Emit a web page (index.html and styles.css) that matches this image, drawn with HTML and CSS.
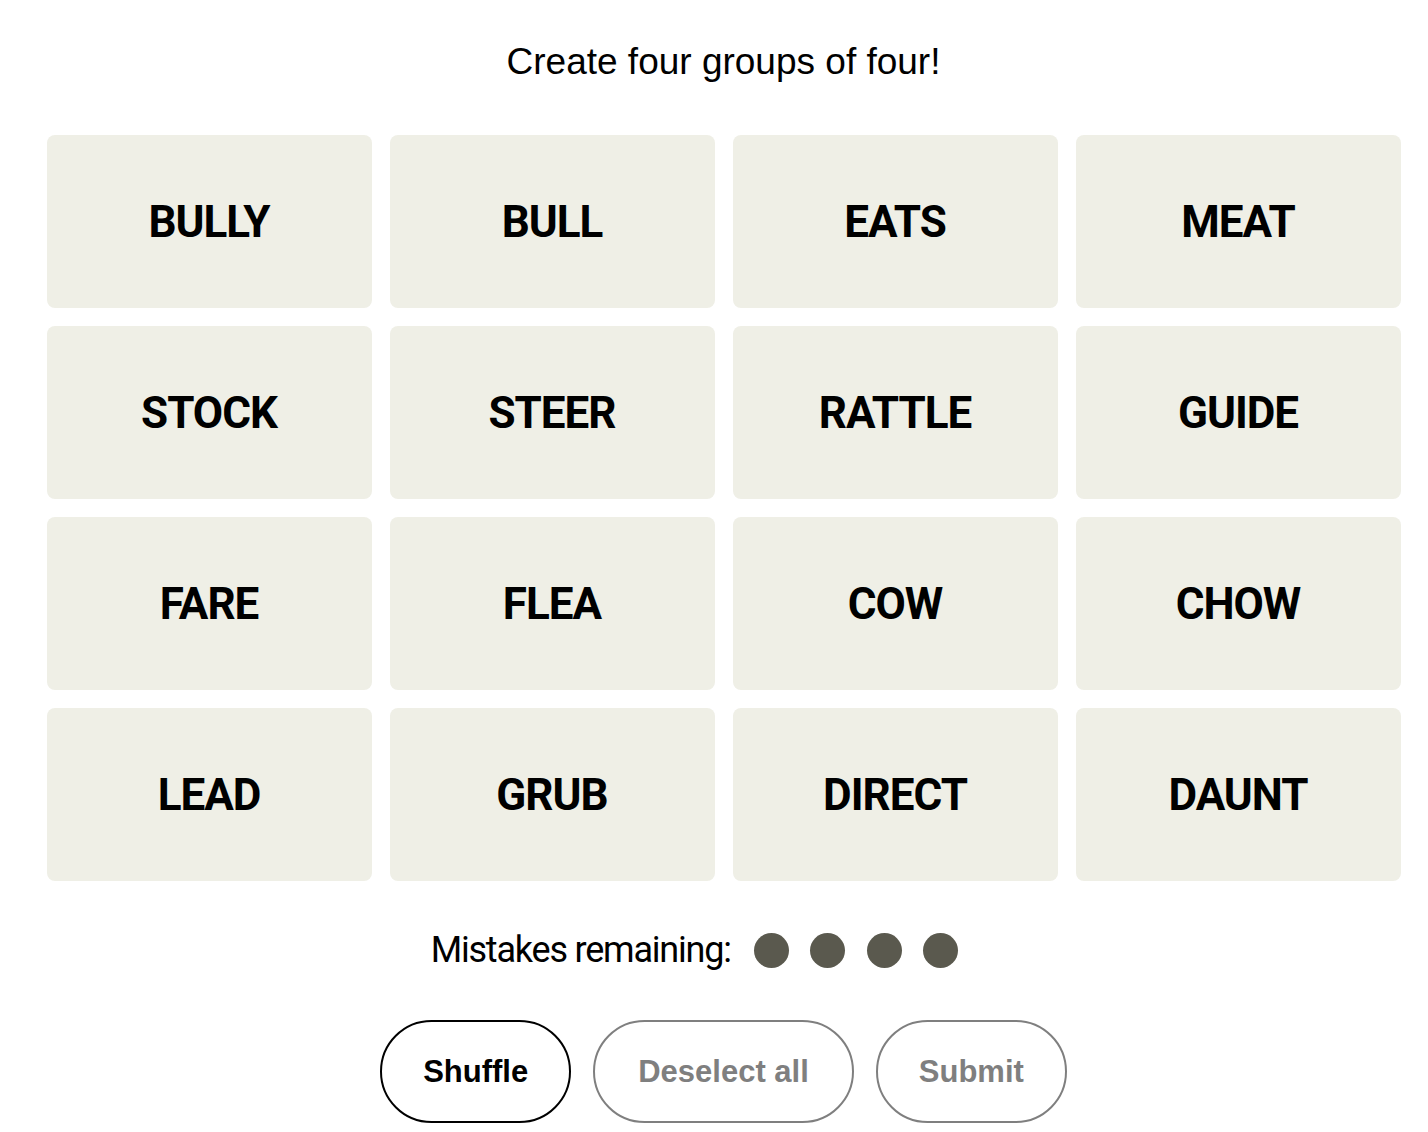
FILE: index.html
```html
<!DOCTYPE html>
<html lang="en">
<head>
<meta charset="utf-8">
<title>Connections</title>
<link rel="stylesheet" href="styles.css">
</head>
<body>
<main class="page">
  <h1 class="prompt">Create four groups of four!</h1>
  <section class="board">
    <div class="tile">BULLY</div>
    <div class="tile">BULL</div>
    <div class="tile">EATS</div>
    <div class="tile">MEAT</div>
    <div class="tile">STOCK</div>
    <div class="tile">STEER</div>
    <div class="tile">RATTLE</div>
    <div class="tile">GUIDE</div>
    <div class="tile">FARE</div>
    <div class="tile">FLEA</div>
    <div class="tile">COW</div>
    <div class="tile">CHOW</div>
    <div class="tile">LEAD</div>
    <div class="tile">GRUB</div>
    <div class="tile">DIRECT</div>
    <div class="tile">DAUNT</div>
  </section>
  <div class="mistakes">
    <span class="mistakes-label">Mistakes remaining:</span>
    <span class="dots">
      <span class="dot"></span>
      <span class="dot"></span>
      <span class="dot"></span>
      <span class="dot"></span>
    </span>
  </div>
  <div class="actions">
    <button class="btn btn-active">Shuffle</button>
    <button class="btn btn-disabled btn-wide">Deselect all</button>
    <button class="btn btn-disabled">Submit</button>
  </div>
</main>
</body>
</html>
```

FILE: styles.css
```css
html, body {
  margin: 0;
  padding: 0;
  background: #ffffff;
}

body {
  font-family: "Liberation Sans", Arial, sans-serif;
  color: #000000;
}

.page {
  width: 1353px;
  margin-left: 47px;
  display: flex;
  flex-direction: column;
  align-items: center;
}

.prompt {
  margin: 0;
  padding-top: 42px;
  height: 40px;
  margin-bottom: 53px;
  font-family: "Liberation Sans", Arial, sans-serif;
  font-weight: 400;
  font-size: 37px;
  line-height: 40px;
  color: #000000;
}

.board {
  display: grid;
  grid-template-columns: repeat(4, 325px);
  grid-auto-rows: 173px;
  gap: 18px;
}

.tile {
  background: #efefe6;
  border-radius: 8px;
  display: flex;
  align-items: center;
  justify-content: center;
  font-family: Roboto, "Liberation Sans", sans-serif;
  font-weight: 700;
  font-size: 44px;
  letter-spacing: -1px;
  color: #000000;
}

.mistakes {
  margin-top: 49px;
  height: 40px;
  display: flex;
  align-items: center;
  padding-right: 58px;
}

.mistakes-label {
  font-family: Roboto, "Liberation Sans", sans-serif;
  font-size: 36px;
  letter-spacing: -1.2px;
  line-height: 40px;
  color: #000000;
}

.dots {
  display: flex;
  gap: 21.5px;
  margin-left: 23px;
}

.dot {
  width: 35px;
  height: 35px;
  border-radius: 50%;
  background: #5a594e;
}

.actions {
  margin-top: 50px;
  display: flex;
  gap: 22px;
}

.btn {
  height: 103px;
  padding: 0 41px;
  border-radius: 52px;
  background: #ffffff;
  font-family: "Liberation Sans", Arial, sans-serif;
  font-weight: 700;
  font-size: 31px;
  display: flex;
  align-items: center;
  justify-content: center;
}

.btn-wide {
  padding: 0 43px;
}

.btn-active {
  border: 2px solid #000000;
  color: #000000;
}

.btn-disabled {
  border: 2px solid #7f7f7f;
  color: #7f7f7f;
}
```
